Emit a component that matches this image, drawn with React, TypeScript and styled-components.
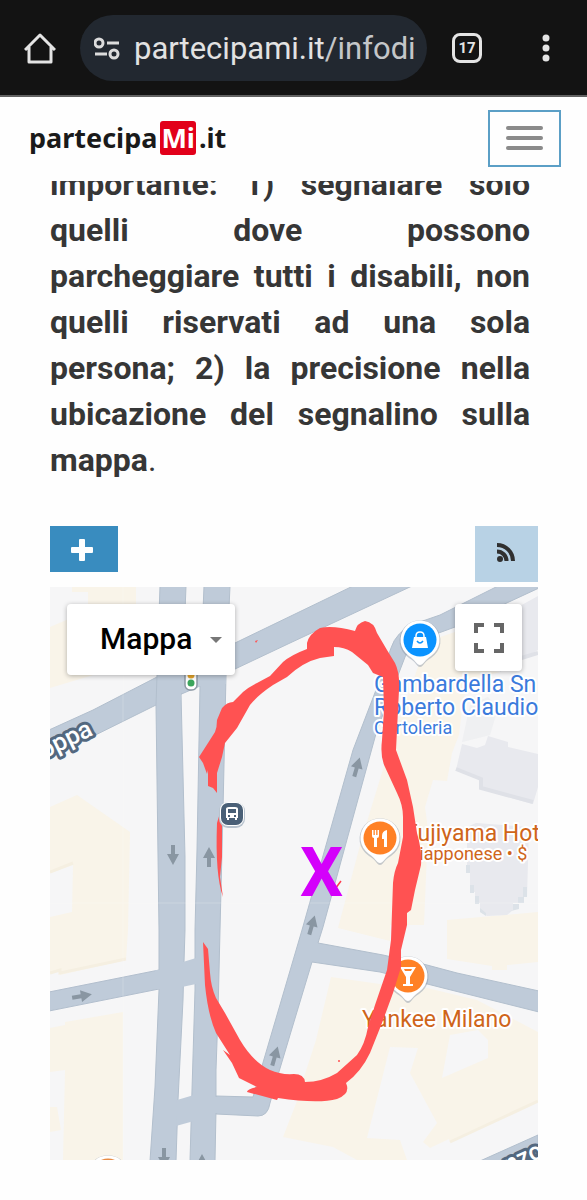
import React from "react";
import styled, { createGlobalStyle } from "styled-components";

const GlobalStyle = createGlobalStyle`
  * { box-sizing: border-box; }
  body { margin: 0; background: #fefefe; font-family: Roboto, "Liberation Sans", sans-serif; }
  button, select { font: inherit; margin: 0; padding: 0; border: 0; cursor: pointer; }
`;

const BrowserBar = styled.header`
  display: flex;
  align-items: center;
  height: 97px;
  padding: 0 26px 0 20px;
  background: #131313;
  border-bottom: 2px solid #626262;
`;

const BarButton = styled.button`
  display: grid;
  place-items: center;
  flex: none;
  width: 40px;
  height: 40px;
  background: none;
  color: #e4e4e4;
`;

const AddressPill = styled.div`
  display: flex;
  align-items: center;
  flex: 1;
  min-width: 0;
  height: 66px;
  margin: 0 20px;
  padding: 2px 10px 0 14px;
  gap: 14px;
  border-radius: 33px;
  background: #222830;
`;

const SiteInfoIcon = styled.svg`
  flex: none;
  color: #dcdcdc;
`;

const Address = styled.span`
  flex: 1;
  overflow: hidden;
  white-space: nowrap;
  font-size: 31px;
  line-height: 44px;
  color: #e2e2e2;
`;

const Path = styled.span`
  color: #c4c6c8;
`;

const TabsButton = styled(BarButton)`
  margin-right: 44px;
`;

const MoreButton = styled(BarButton)`
  width: 30px;
`;

const TabCount = styled.span`
  display: grid;
  place-items: center;
  width: 30px;
  height: 30px;
  border: 3px solid #e4e4e4;
  border-radius: 8px;
  font-size: 15px;
  font-weight: 700;
`;

const SiteHeader = styled.header`
  position: sticky;
  top: 0;
  z-index: 2;
  display: flex;
  align-items: center;
  justify-content: space-between;
  height: 84px;
  padding: 0 26px 2px 29px;
  background: #fefefe;
`;

const Logo = styled.a`
  display: flex;
  align-items: center;
  gap: 3px;
  font-family: "Noto Sans", "Open Sans", sans-serif;
  font-size: 27px;
  font-weight: 700;
  line-height: 34px;
  color: #1a1a1a;
  text-decoration: none;
`;

const LogoMark = styled.span`
  padding: 0 1px;
  border-radius: 3px;
  background: #e2001a;
  color: #fff;
`;

const MenuButton = styled.button`
  display: flex;
  flex-direction: column;
  align-items: center;
  justify-content: center;
  gap: 6px;
  width: 73px;
  height: 57px;
  border: 2px solid #5b9fc6;
  background: #fefefe;
`;

const MenuLine = styled.span`
  width: 37px;
  height: 4px;
  border-radius: 2px;
  background: #8a8a8a;
`;

const Main = styled.main`
  padding: 0 49px 40px 50px;
`;

const Notice = styled.p`
  margin: -20px 8px 43px 0;
  font-size: 32px;
  line-height: 46px;
  text-align: justify;
  color: #363636;
`;

const Toolbar = styled.div`
  display: flex;
  align-items: flex-start;
  justify-content: space-between;
  margin-bottom: 5px;
`;

const AddButton = styled.button`
  display: grid;
  place-items: center;
  width: 68px;
  height: 46px;
  padding: 2px 4px 0 0;
  background: #398cbf;
`;

const FeedLink = styled.a`
  display: grid;
  place-items: center;
  width: 63px;
  height: 56px;
  padding: 0 2px 4px 0;
  background: #b8d2e5;
`;

const MapFrame = styled.section`
  position: relative;
  overflow: hidden;
`;

const MapCanvas = styled.svg`
  display: block;
  width: 100%;
  height: auto;
`;

const MapControls = styled.div`
  position: absolute;
  inset: 17px 16px auto 17px;
  display: flex;
  align-items: flex-start;
  justify-content: space-between;
`;

const MapTypeControl = styled.label`
  display: flex;
  align-items: center;
  width: 168px;
  height: 71px;
  padding-right: 12px;
  border-radius: 4px;
  background: #fff;
  box-shadow: 0 1px 5px rgba(0, 0, 0, 0.3);
`;

const MapTypeSelect = styled.select`
  flex: 1;
  min-width: 0;
  height: 100%;
  padding: 0 0 2px 33px;
  appearance: none;
  background: none;
  font-size: 30px;
  font-weight: 500;
  color: #000;
`;

const FullscreenButton = styled.button`
  display: grid;
  place-items: center;
  width: 67px;
  height: 67px;
  border-radius: 4px;
  background: #fff;
  box-shadow: 0 1px 5px rgba(0, 0, 0, 0.3);
`;

const PlaceLabel = styled.text<{ $tone: string; $size?: number }>`
  font-family: Roboto, "Liberation Sans", sans-serif;
  font-size: ${(p) => p.$size ?? 23}px;
  fill: ${(p) => p.$tone};
  stroke: #fff;
  stroke-width: 4px;
  stroke-linejoin: round;
  paint-order: stroke;
`;

const StreetLabel = styled.text`
  font-family: Roboto, "Liberation Sans", sans-serif;
  font-size: 25px;
  font-weight: 500;
  fill: #fff;
  stroke: #53687f;
  stroke-width: 6px;
  stroke-linejoin: round;
  paint-order: stroke;
`;

const CrossMark = styled.text`
  font-family: Roboto, "Liberation Sans", sans-serif;
  font-size: 68px;
  font-weight: 700;
  fill: #d400fb;
`;

const BLUE = "#3b7bdc";
const ORANGE = "#cf651a";

function DirectionArrow({ x, y, turn }: { x: number; y: number; turn: number }) {
  return (
    <g transform={`translate(${x} ${y}) rotate(${turn})`} fill="#8996a2">
      <path d="M0-10 6 1H2V10H-2V1H-6Z" />
    </g>
  );
}

function Pin({ x, y, fill, children }: { x: number; y: number; fill: string; children?: React.ReactNode }) {
  return (
    <g transform={`translate(${x} ${y})`}>
      <path
        d="M0 27C-3 27-4 22-11 18A20.500 20.500 0 1 1 11 18C4 22 3 27 0 27Z"
        fill="#8493a5"
        opacity=".45"
      />
      <path d="M0 25C-3 25-5 20-11 16A19.500 19.500 0 1 1 11 16C5 20 3 25 0 25Z" fill="#fff" />
      <circle r="16.500" fill={fill} />
      {children}
    </g>
  );
}

function StreetMap() {
  return (
    <MapCanvas viewBox="50 587 488 573" role="img" aria-label="Mappa dei parcheggi">
      <rect x="50" y="587" width="488" height="573" fill="#f6f6f7" />

      <g fill="#f9f4e9">
        <path d="M72 587H136V612H88V592H72Z" />
        <path d="M50 627 85 612 110 670 50 688Z" />
        <path d="M50 807 77 795 130 832 128 930 126 960 60 975 59 971 50 973V917L72 912 73 865 50 873Z" />
        <path d="M50 1028 65 1025V1022L123 1012V1160H63L65 1070 50 1072Z" />
        <path d="M50 1107H57L61 1130 50 1132Z" />
        <path d="M424 650Q427 641 437 638L455 632 456 668 500 672 470 680 463 700 459 735 452 753 447 781 433 780 425 807 428 829 424 925 390 925V941L338 928 362 838 392 740Z" />
        <path d="M447 920 538 912V962L507 965V970H492V966L447 959Z" />
        <path
          fillRule="evenodd"
          d="M331 977 380 984 427 988 477 1000 538 1032V1100L450 1142 449 1139 430 1148 423 1142 437 1123 410 1073 418 1048 390 1047 367 1138 400 1140 407 1160H357L333 1147 283 1137 297 1101 303 1080 316 1040ZM450 1035 478 1030 488 1040V1058L442 1078Z"
        />
      </g>

      <g fill="none" stroke="#f5efe1" strokeWidth="3">
        <path d="M50 872 73 863M50 973 60 970 60 973 126 959M538 1101 450 1142" />
      </g>

      <g fill="#e8e9ee">
        <path d="M458 640 538 596V650L500 672 505 655Z" />
        <path d="M462 742 470 705 488 697 498 708 490 735Z" opacity=".5" />
        <path d="M462 744 477 748 485 745 488 736 508 742V747L538 754V787L533 804 480 789 481 779 456 770Z" />
        <path d="M476 823 529 827 527 897H520V903H513V910L507 915 487 916 480 912V903H475V892H470V873H467V827Z" />
      </g>
      <g fill="none" stroke="#dfe1e7" strokeWidth="4">
        <path d="M456 769 481 779V788L533 802M515 660 538 653" />
      </g>
      <g fill="#dce2e8">
        <path d="M466 865H470V873H466ZM470 885H474V893H470ZM475 896H479V904H475ZM480 908 486 913V916L480 912ZM507 912 519 909V904H513V910ZM518 897H524V903H518ZM523 887H527V897H523Z" />
      </g>

      <g fill="#bfcbd9" stroke="#b2bfcd" strokeWidth="1">
        <path d="M49 730 93 710 157 677 235 643 353 586H412L290 643 235 669 200 686 156 705 49 758Z" />
        <path d="M498 586 440 615 414 624Q396 632 391 648L376 690 353 750 302 930 262 1066 253 1097 216 1096V1114L258 1116Q268 1116 270 1103L278 1075 290 1035 312 962 380 972 447 989 539 1012V991L457 973 427 965 383 955 318 943 323 927 377 730 405 657Q410 643 425 638L455 627 539 588V586Z" />
        <path d="M49 992 159 970V989L49 1011Z" />
        <path d="M160 586H186L185 612 181 693 185 857V930L184 962 183 1000 178 1100 176 1161H150L155 1087 159 990V930L156 705Z" />
        <path d="M204 586H230L226 675 223 810 220 930 218 1013 216 1070V1110L215 1161H190L192 1090 195 990V930L197 850 200 686Z" />
      </g>
      <path d="M178 640H204L201 686 181 693ZM183 962 196 958V984L182 987ZM177 1100 194 1095V1121L176 1126ZM155 970H164V989H155ZM210 1097H219V1113H210ZM158 640H182L181 692V700H158ZM203 640H226V684H201Z" fill="#bfcbd9" />
      <path d="M480 1161 538 1135V1161Z" fill="#bfcbd9" stroke="#b2bfcd" />
      <path d="M123 587V1160M50 903H538" stroke="#fff" opacity=".2" />

      <DirectionArrow x={173} y={855} turn={180} />
      <DirectionArrow x={209} y={857} turn={0} />
      <DirectionArrow x={357} y={767} turn={16} />
      <DirectionArrow x={312} y={925} turn={16} />
      <DirectionArrow x={275} y={1056} turn={16} />
      <DirectionArrow x={82} y={996} turn={80} />
      <DirectionArrow x={164} y={1158} turn={180} />
      <DirectionArrow x={202} y={1164} turn={0} />

      <rect x="185" y="660" width="12" height="30" rx="5" fill="#fff" stroke="#8d99a5" strokeWidth="1.500" />
      <circle cx="191" cy="675" r="3.500" fill="#e5a52c" />
      <circle cx="191" cy="683" r="3.500" fill="#3ba55c" />

      <StreetLabel transform="translate(44 759) rotate(-26)">oppa</StreetLabel>
      <StreetLabel transform="translate(496 1179) rotate(-25)">enzo</StreetLabel>

      <Pin x={420} y={640} fill="#0a93ff">
        <path d="M-6-3H6L8 8H-8Z" fill="#fff" />
        <path d="M-4-2V-4Q-4-8 0-8T4-4V-2" fill="none" stroke="#fff" strokeWidth="1.500" />
        <path d="M-3 1Q0 5 3 1" fill="none" stroke="#0a93ff" strokeWidth="1.500" />
      </Pin>
      <Pin x={380} y={838} fill="#ff8126">
        <path d="M-8-8V-2Q-8 0-6 0V9H-3V0Q-1 0-1-2V-8H-2.500V-3H-3.800V-8H-5.200V-3H-6.500V-8ZM7-8Q2-7 2-2V1H4V9H7Z" fill="#fff" />
      </Pin>
      <Pin x={408} y={976} fill="#ff8126">
        <path d="M-8-9H8L2 1V8H5V10H-5V8H-2V1ZM-4-7-3-5H3L4-7Z" fill="#fff" fillRule="evenodd" />
      </Pin>
      <Pin x={108} y={1175} fill="#e88b43" />

      <PlaceLabel x="374" y="692" $tone={BLUE}>Gambardella Sn</PlaceLabel>
      <PlaceLabel x="374" y="715" $tone={BLUE}>Roberto Claudio</PlaceLabel>
      <PlaceLabel x="374" y="734" $tone={BLUE} $size={18}>Cartoleria</PlaceLabel>
      <PlaceLabel x="405" y="841" $tone={ORANGE}>Fujiyama Hot</PlaceLabel>
      <PlaceLabel x="407" y="860" $tone={ORANGE} $size={18}>Giapponese • $</PlaceLabel>
      <PlaceLabel x="362" y="1027" $tone={ORANGE}>Yankee Milano</PlaceLabel>

      <path d="M335 889 341 881M333 888V896" fill="none" stroke="#ff3b4e" strokeWidth="1.500" />
      <CrossMark x="300" y="896">X</CrossMark>
      <g fill="#ff5252">
        <path d="M199 757 208 743 215 732Q217 727 217 720L222 708Q227 702 233 702L243 692Q249 687 257 683L270 676 283 662Q291 655 307 649L307 643Q309 634 320 628 333 625 355 631 357 623 365 621 374 622 377 633L387 650 395 663Q400 673 399 690L396 750 407 780 413 807 417 833Q422 850 421 865L415 890 411 910 407 913 407 925 401 950V967L393 993 382 1023 370 1053Q361 1072 346 1083 351 1094 337 1099 318 1104 278 1098L277 1100 247 1092Q247 1089 257 1087L239 1078 232 1063 223 1050 230 1055 216 1033Q208 1015 205 985L203 942 208 949 210 973Q211 987 216 998L225 1013 240 1040Q253 1062 270 1070 281 1075 294 1074 304 1074 305 1082 322 1082 337 1073L357 1055Q365 1044 368 1027L375 1005 387 970 391 940 393 883Q394 871 398 863L403 837V817Q403 805 397 793L385 767Q380 757 382 740L384 710 383 677 373 673 368 665 352 652Q344 647 334 647V656L320 658Q303 662 287 677L273 685Q258 695 250 705L237 728 225 743 222 757 217 773V793L213 788 208 786V770L207 774 203 763Z" />
        <path d="M220 813 222 823V857L220 877 223 897Q215 875 217 823Z" />
        <path d="M255 641 258 640 256 643Z" />
        <circle cx="339" cy="1061" r="1" />
      </g>

      <g transform="translate(232 814)">
        <rect x="-13" y="-12" width="26" height="26" rx="9" fill="#b8c3ce" />
        <rect x="-12" y="-12" width="24" height="24" rx="8" fill="#fff" />
        <rect x="-11" y="-11" width="22" height="22" rx="7" fill="#4a6077" />
        <path d="M-6-5Q-6-7-3-7H3Q6-7 6-5V4H5V6H3V4H-3V6H-5V4H-6ZM-4-5V-1H4V-5ZM-4 1V3H-2V1ZM2 1V3H4V1Z" fill="#fff" fillRule="evenodd" />
      </g>
    </MapCanvas>
  );
}

export default function App() {
  return (
    <>
      <GlobalStyle />
      <BrowserBar>
        <BarButton aria-label="Pagina iniziale">
          <svg width="32" height="32" viewBox="0 0 32 32" fill="none" stroke="currentColor" strokeWidth="3" strokeLinejoin="round">
            <path d="M1 18 16 3 31 18M5 15V30H27V15" />
          </svg>
        </BarButton>
        <AddressPill>
          <SiteInfoIcon width="26" height="24" viewBox="0 0 26 24" fill="none" stroke="currentColor" strokeWidth="3">
            <circle cx="5" cy="6" r="4" />
            <path d="M13 6H25M1 17H13" />
            <circle cx="20" cy="17" r="4" />
          </SiteInfoIcon>
          <Address>
            partecipami.it<Path>/infodisabili</Path>
          </Address>
        </AddressPill>
        <TabsButton aria-label="Schede aperte">
          <TabCount>17</TabCount>
        </TabsButton>
        <MoreButton aria-label="Altro">
          <svg width="8" height="28" viewBox="0 0 8 28" fill="currentColor">
            <circle cx="4" cy="4" r="3.500" />
            <circle cx="4" cy="14" r="3.500" />
            <circle cx="4" cy="24" r="3.500" />
          </svg>
        </MoreButton>
      </BrowserBar>

      <SiteHeader>
        <Logo href="#">
          <span>partecipa</span>
          <LogoMark>Mi</LogoMark>
          <span>.it</span>
        </Logo>
        <MenuButton aria-label="Menu">
          <MenuLine />
          <MenuLine />
          <MenuLine />
        </MenuButton>
      </SiteHeader>

      <Main>
        <Notice>
          <strong>
            importante: 1) segnalare solo quelli dove possono parcheggiare tutti i disabili, non
            quelli riservati ad una sola persona; 2) la precisione nella ubicazione del segnalino
            sulla mappa
          </strong>
          .
        </Notice>
        <Toolbar>
          <AddButton aria-label="Aggiungi">
            <svg width="22" height="22" viewBox="0 0 22 22" fill="#fff">
              <path d="M9 0H13Q14 0 14 1V8H21Q22 8 22 9V13Q22 14 21 14H14V21Q14 22 13 22H9Q8 22 8 21V14H1Q0 14 0 13V9Q0 8 1 8H8V1Q8 0 9 0Z" />
            </svg>
          </AddButton>
          <FeedLink href="#" aria-label="Feed RSS">
            <svg width="20" height="20" viewBox="0 0 20 20" fill="none" stroke="#303030" strokeWidth="4">
              <circle cx="4" cy="17" r="3" fill="#303030" stroke="none" />
              <path d="M1 9.500A9.500 9.500 0 0 1 10.500 19M1 3A16 16 0 0 1 17 19" />
            </svg>
          </FeedLink>
        </Toolbar>
        <MapFrame>
          <StreetMap />
          <MapControls>
            <MapTypeControl>
              <MapTypeSelect aria-label="Tipo di mappa" defaultValue="Mappa">
                <option>Mappa</option>
              </MapTypeSelect>
              <svg width="14" height="8" viewBox="0 0 14 8" fill="#777">
                <path d="M1 1H13L7 7Z" />
              </svg>
            </MapTypeControl>
            <FullscreenButton aria-label="Schermo intero">
              <svg width="30" height="30" viewBox="0 0 30 30" fill="none" stroke="#666" strokeWidth="4">
                <path d="M2 10V2H10M20 2H28V10M28 20V28H20M10 28H2V20" />
              </svg>
            </FullscreenButton>
          </MapControls>
        </MapFrame>
      </Main>
    </>
  );
}
